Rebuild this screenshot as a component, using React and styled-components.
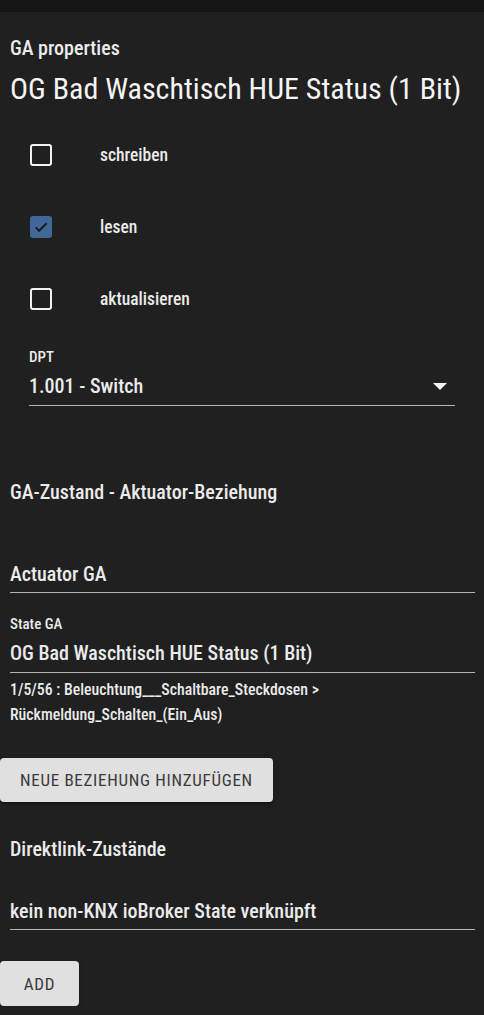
import React from "react";
import styled, { createGlobalStyle } from "styled-components";

const GlobalStyle = createGlobalStyle`
  html, body {
    margin: 0;
    padding: 0;
    background: #202020;
  }
  body {
    font-family: "Roboto Condensed", Roboto, "Liberation Sans", sans-serif;
    font-stretch: condensed;
    color: #ebebeb;
  }
`;

const TopBar = styled.div`
  height: 12px;
  background: #151515;
`;

const Panel = styled.div`
  padding: 0 9px 0 10px;
`;

const Subtitle = styled.div`
  margin-top: 24px;
  font-size: 20px;
  line-height: 24px;
  font-weight: 500;
`;

const Title = styled.h1`
  margin: 11px 0 0;
  font-size: 30px;
  line-height: 36px;
  font-weight: 400;
  color: #f4f4f4;
  white-space: nowrap;
`;

const CheckList = styled.div`
  margin-top: 12px;
  padding-left: 20px;
`;

const CheckRow = styled.label`
  height: 72px;
  display: flex;
  align-items: center;
  gap: 48px;
  font-size: 17.5px;
  font-weight: 500;
`;

const Box = styled.span`
  width: 22px;
  height: 22px;
  box-sizing: border-box;
  border-radius: 3px;
  border: ${({ checked }) => (checked ? "none" : "2.5px solid #f2f2f2")};
  background: ${({ checked }) => (checked ? "#3f6797" : "transparent")};
  display: flex;
  align-items: center;
  justify-content: center;
`;

const Field = styled.div`
  margin-top: ${({ top }) => top}px;
  ${({ inset }) => (inset ? "margin-left: 19px; margin-right: 20px;" : "")}
`;

const FieldLabel = styled.div`
  font-size: 15px;
  line-height: 18px;
  font-weight: 500;
  margin-bottom: 8px;
`;

const FieldValue = styled.div`
  display: flex;
  align-items: center;
  justify-content: space-between;
  font-size: 20px;
  line-height: 24px;
  font-weight: 500;
  padding-bottom: ${({ pb }) => pb || 6}px;
  border-bottom: 1px solid #b4b4b4;
`;

const Arrow = styled.span`
  width: 0;
  height: 0;
  margin-right: 8px;
  border-left: 7px solid transparent;
  border-right: 7px solid transparent;
  border-top: 7px solid #f4f4f4;
`;

const SectionHeading = styled.div`
  margin-top: ${({ top }) => top}px;
  font-size: 20px;
  line-height: 24px;
  font-weight: 500;
`;

const Helper = styled.div`
  margin-top: 4px;
  font-size: 15.8px;
  line-height: 25px;
  font-weight: 500;
`;

const Button = styled.button`
  display: block;
  margin: ${({ top }) => top}px 0 0 -10px;
  height: ${({ h }) => h}px;
  min-width: 79px;
  padding: 0 20px;
  border: none;
  border-radius: 4px;
  background: #e0e0e0;
  color: #3a3a3a;
  font-family: inherit;
  font-stretch: condensed;
  font-size: 17px;
  font-weight: 400;
  letter-spacing: 0.7px;
  text-transform: uppercase;
  box-shadow: 0 2px 2px rgba(0, 0, 0, 0.25), 0 1px 5px rgba(0, 0, 0, 0.2);
`;

const Check = () => (
  <svg width="18" height="18" viewBox="0 0 24 24">
    <path
      d="M5 12.5l4.5 4.5L19.5 7"
      fill="none"
      stroke="#1c1c1c"
      strokeWidth="2.6"
    />
  </svg>
);

const options = [
  { label: "schreiben", checked: false },
  { label: "lesen", checked: true },
  { label: "aktualisieren", checked: false },
];

export default function App() {
  return (
    <>
      <GlobalStyle />
      <TopBar />
      <Panel>
        <Subtitle>GA properties</Subtitle>
        <Title>OG Bad Waschtisch HUE Status (1 Bit)</Title>

        <CheckList>
          {options.map((o) => (
            <CheckRow key={o.label}>
              <Box checked={o.checked}>{o.checked && <Check />}</Box>
              {o.label}
            </CheckRow>
          ))}
        </CheckList>

        <Field top={13} inset>
          <FieldLabel>DPT</FieldLabel>
          <FieldValue pb={7}>
            1.001 - Switch
            <Arrow />
          </FieldValue>
        </Field>

        <SectionHeading top={74}>GA-Zustand - Aktuator-Beziehung</SectionHeading>

        <Field top={58}>
          <FieldValue>Actuator GA</FieldValue>
        </Field>

        <Field top={22}>
          <FieldLabel>State GA</FieldLabel>
          <FieldValue pb={7}>OG Bad Waschtisch HUE Status (1 Bit)</FieldValue>
        </Field>
        <Helper>
          1/5/56 : Beleuchtung___Schaltbare_Steckdosen &gt;
          <br />
          Rückmeldung_Schalten_(Ein_Aus)
        </Helper>

        <Button top={31} h={44}>Neue Beziehung hinzufügen</Button>

        <SectionHeading top={35}>Direktlink-Zustände</SectionHeading>

        <Field top={38}>
          <FieldValue>kein non-KNX ioBroker State verknüpft</FieldValue>
        </Field>

        <Button top={31} h={45}>Add</Button>
      </Panel>
    </>
  );
}
